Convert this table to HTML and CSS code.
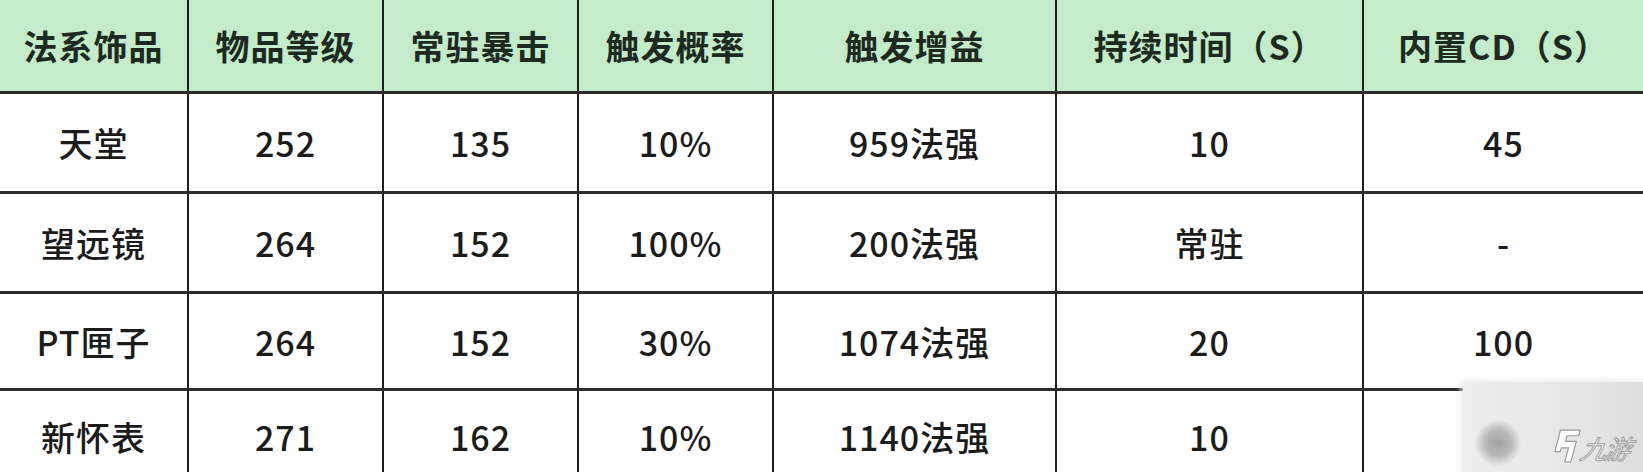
FILE: index.html
```html
<!DOCTYPE html>
<html lang="zh-CN">
<head>
<meta charset="utf-8">
<title>法系饰品对比</title>
<link rel="stylesheet" href="styles.css">
</head>
<body>
<div class="page">
  <table class="grid">
    <colgroup>
      <col class="w-name">
      <col class="w-mid">
      <col class="w-mid">
      <col class="w-mid">
      <col class="w-buff">
      <col class="w-dur">
      <col class="w-cd">
    </colgroup>
    <thead>
      <tr class="head-row">
        <th>法系饰品</th>
        <th>物品等级</th>
        <th>常驻暴击</th>
        <th>触发概率</th>
        <th>触发增益</th>
        <th>持续时间（S）</th>
        <th>内置CD（S）</th>
      </tr>
    </thead>
    <tbody>
      <tr class="row-a">
        <td>天堂</td><td>252</td><td>135</td><td>10%</td><td>959法强</td><td>10</td><td>45</td>
      </tr>
      <tr class="row-a">
        <td>望远镜</td><td>264</td><td>152</td><td>100%</td><td>200法强</td><td>常驻</td><td>-</td>
      </tr>
      <tr class="row-b">
        <td>PT匣子</td><td>264</td><td>152</td><td>30%</td><td>1074法强</td><td>20</td><td>100</td>
      </tr>
      <tr class="row-c">
        <td>新怀表</td><td>271</td><td>162</td><td>10%</td><td>1140法强</td><td>10</td><td></td>
      </tr>
    </tbody>
  </table>

  <div class="watermark">
    <span class="wm-blob"></span>
    <div class="wm-logo">
      <svg class="wm-mark" viewBox="0 0 30 38" width="28" height="36" aria-hidden="true">
        <path d="M11 2 L29 2 L27.5 8 L15 8 L13.4 14 L25 14 L19 36 L12.5 36 L16.6 21 L9 21 L7.6 25 L2 25 L8 2 Z" fill="#ffffff" stroke="#9c9c9c" stroke-width="1.3" stroke-linejoin="round"/>
      </svg>
      <span class="wm-text">九游</span>
    </div>
  </div>
</div>
</body>
</html>
```

FILE: styles.css
```css
html, body {
  margin: 0;
  padding: 0;
  background: #ffffff;
}

.page {
  position: relative;
  width: 1643px;
  height: 472px;
  overflow: hidden;
  background: #ffffff;
}

.grid {
  width: 1643px;
  table-layout: fixed;
  border-collapse: collapse;
  font-family: "Noto Sans CJK SC", "Noto Sans", sans-serif;
  color: #1b1b1b;
}

.w-name { width: 188px; }
.w-mid  { width: 195px; }
.w-buff { width: 283px; }
.w-dur  { width: 307px; }
.w-cd   { width: 280px; }

.grid th,
.grid td {
  padding: 0;
  text-align: center;
  vertical-align: middle;
  border-left: 2px solid #1e1e1e;
  border-bottom: 3px solid #2b2b2b;
  font-size: 34px;
  letter-spacing: 1px;
  white-space: nowrap;
}

.grid th:first-child,
.grid td:first-child {
  border-left: none;
}

.grid th {
  background: #c4ecca;
  color: #1d2a1f;
  font-weight: 700;
  height: 91px;
}

.grid td {
  font-weight: 500;
  background: #ffffff;
}

.row-a td { height: 97px; }
.row-b td { height: 94px; }
.row-c td { height: 90px; border-bottom: none; }

/* watermark overlay in the bottom-right corner */
.watermark {
  position: absolute;
  left: 1463px;
  top: 382px;
  width: 190px;
  height: 100px;
  background: linear-gradient(90deg, #eeeeee 0%, #e9e9e9 45%, #dcdcdc 100%);
  box-shadow: 0 0 6px 2px rgba(235, 235, 235, 0.9);
}

.wm-blob {
  position: absolute;
  left: 12px;
  top: 38px;
  width: 46px;
  height: 46px;
  border-radius: 50%;
  background: radial-gradient(circle, #a3a3a3 0%, #b9b9b9 40%, rgba(220, 220, 220, 0) 72%);
}

.wm-logo {
  position: absolute;
  left: 90px;
  top: 46px;
  display: flex;
  align-items: flex-end;
  gap: 0;
}

.wm-mark {
  display: block;
}

.wm-text {
  font-family: "Noto Sans CJK SC", sans-serif;
  font-size: 26px;
  font-style: italic;
  font-weight: 400;
  line-height: 32px;
  color: #ffffff;
  -webkit-text-stroke: 1px #9c9c9c;
  transform: skewX(-12deg);
  letter-spacing: -2px;
}
```
